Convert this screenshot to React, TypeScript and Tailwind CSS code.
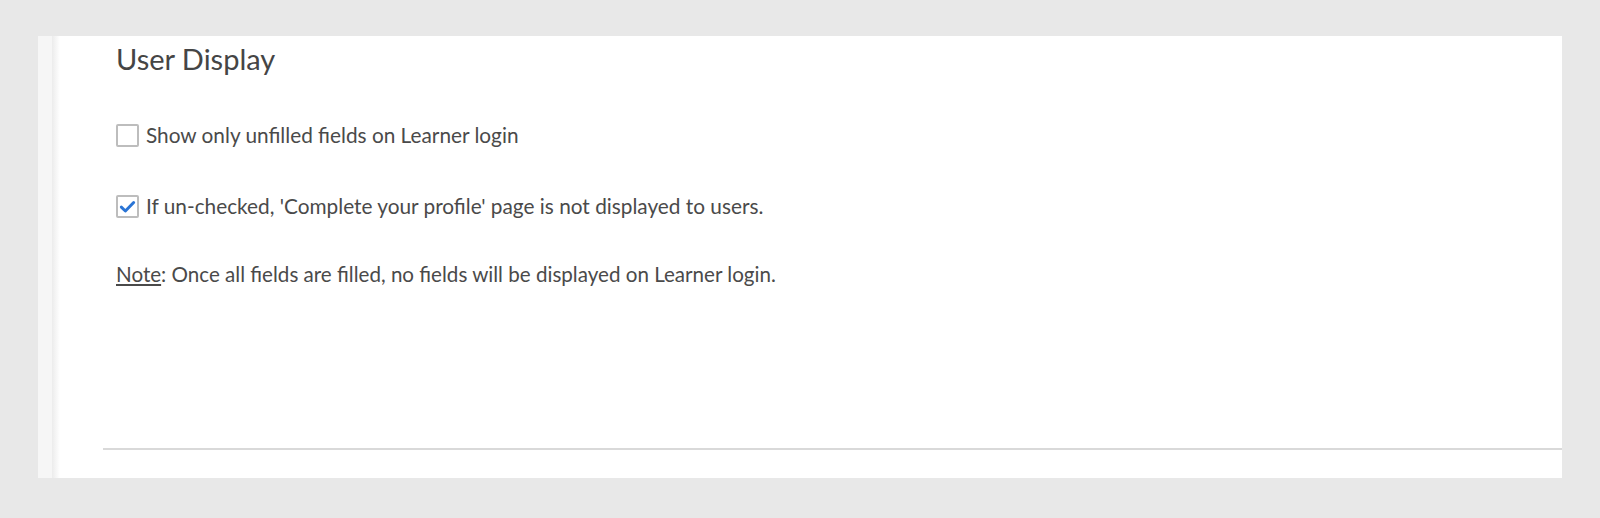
export default function App() {
  return (
    <div className="h-[518px] w-full bg-[#e8e8e8] pt-[36px] pl-[38px] pr-[38px]" style={{ fontFamily: 'Lato, "Open Sans", sans-serif' }}>
      <div className="flex h-[442px] bg-white">
        {/* left rail */}
        <div className="w-[14px] shrink-0 bg-[#f6f6f6]" />
        <div className="w-[8px] shrink-0 bg-gradient-to-r from-[#ececec] to-white" />

        <div className="flex flex-1 flex-col">
          <div className="flex-1 pl-[56px] pt-[5px] text-[#4a4a4a]">
            <h2 className="text-[29px] leading-[36px] text-[#454545]">User Display</h2>

            <label className="mt-[46px] flex h-[24px] items-center gap-[7px] text-[20.8px]">
              <span className="h-[23px] w-[23px] shrink-0 rounded-[2px] border-2 border-[#bdbdbd] bg-white" />
              <span>Show only unfilled fields on Learner login</span>
            </label>

            <label className="mt-[47px] flex h-[24px] items-center gap-[7px] text-[20.8px]">
              <span className="flex h-[23px] w-[23px] shrink-0 items-center justify-center rounded-[2px] border-2 border-[#bdbdbd] bg-white">
                <svg viewBox="0 0 16 16" className="h-[17px] w-[17px]" fill="none">
                  <path d="M2.2 8.6 L6 12.2 L13.8 4.2" stroke="#2a74d5" strokeWidth="2.8" strokeLinecap="round" strokeLinejoin="round" />
                </svg>
              </span>
              <span>If un-checked, 'Complete your profile' page is not displayed to users.</span>
            </label>

            <p className="mt-[44px] text-[20.6px] leading-[24px]">
              <span className="underline underline-offset-2">Note</span>: Once all fields are filled, no fields will be displayed on Learner login.
            </p>
          </div>

          <div className="ml-[43px] h-[2px] bg-[#d9d9d9]" />
          <div className="h-[28px]" />
        </div>
      </div>
    </div>
  );
}
